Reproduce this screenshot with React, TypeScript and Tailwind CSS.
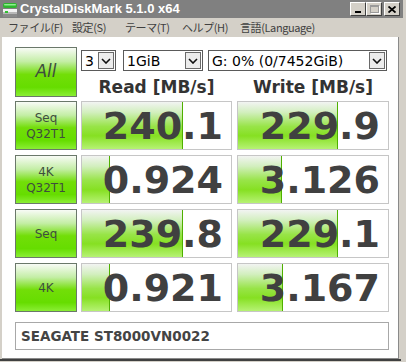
const ROWS = [
  { label: ['Seq', 'Q32T1'], read: '240.1', readBar: 101, write: '229.9', writeBar: 100 },
  { label: ['4K', 'Q32T1'], read: '0.924', readBar: 28, write: '3.126', writeBar: 44 },
  { label: ['Seq'], read: '239.8', readBar: 101, write: '229.1', writeBar: 100 },
  { label: ['4K'], read: '0.921', readBar: 28, write: '3.167', writeBar: 45 },
];

const MENU = [
  { label: 'ファイル(F)', w: 'w-[64px]' },
  { label: '設定(S)', w: 'w-[53px]' },
  { label: 'テーマ(T)', w: 'w-[57px]' },
  { label: 'ヘルプ(H)', w: 'w-[58px]' },
  { label: '言語(Language)', w: 'w-[90px]' },
];

const greenButton =
  'border border-[#6a786a] bg-[linear-gradient(to_bottom,#f8fbf6_0%,#c4eea6_28%,#72de08_55%,#66dd00_82%,#8aee34_100%)] text-[#3e4e3e] flex flex-col items-center justify-center';

const TitleIcon = () => (
  <svg width="16" height="16" viewBox="0 0 16 16">
    <rect x="1" y="1" width="14" height="5" rx="2" fill="#2fb52f" />
    <rect x="2" y="2" width="12" height="1.5" rx="0.75" fill="#8ef08e" />
    <rect x="1" y="7" width="14" height="8" rx="1" fill="#b8b8b8" />
    <rect x="1" y="7" width="14" height="3" fill="#f2f2f2" />
    <rect x="1" y="12" width="14" height="3" fill="#8a8a8a" />
    <rect x="3" y="9" width="3" height="2" fill="#30c030" />
  </svg>
);

const Chevron = () => (
  <svg width="10" height="6" viewBox="0 0 10 6">
    <path d="M1 1 L5 5 L9 1" fill="none" stroke="#111" strokeWidth="1.6" />
  </svg>
);

const Select = ({ value, w }: { value: string; w: string }) => (
  <div className={`${w} h-[21px] border border-[#5a5a5a] bg-white flex items-center justify-between pl-[3px] pr-[1px]`}>
    <span className="text-[14px] text-black leading-none">{value}</span>
    <span className="w-[16px] h-[17px] border border-[#6a6a6a] bg-[#ececec] flex items-center justify-center">
      <Chevron />
    </span>
  </div>
);

const Cell = ({ value, bar, w }: { value: string; bar: number; w: string }) => (
  <div className={`relative ${w} h-full border border-[#c6c6c6] bg-white overflow-hidden`}>
    <div
      className="absolute left-0 top-0 bottom-0 border-r border-[#4fb000] bg-[linear-gradient(to_bottom,#f2f4f2_0%,#d2efbe_22%,#98e448_52%,#86e022_72%,#b6f274_100%)]"
      style={{ width: bar }}
    />
    <div className="relative h-full flex items-center justify-end pr-[8px] text-[38px] font-bold text-[#404040] leading-none font-['DejaVu_Sans',sans-serif]">
      {value}
    </div>
  </div>
);

export default function App() {
  return (
    <div className="w-[406px] h-[362px] bg-[#d4d0c8] flex flex-col overflow-hidden font-['DejaVu_Sans',sans-serif]">
      {/* title bar */}
      <div className="w-[403px] h-[18px] bg-[#808080] flex items-center">
        <div className="ml-[2px] mt-[1px]">
          <TitleIcon />
        </div>
        <span className="ml-[2px] text-[13px] font-bold text-white font-['Liberation_Sans',sans-serif]">
          CrystalDiskMark 5.1.0 x64
        </span>
        <div className="ml-auto mr-[3px] flex items-center">
          <div className="w-[16px] h-[14px] bg-[#d4d0c8] border border-t-white border-l-white border-r-[#404040] border-b-[#404040] flex items-end justify-center pb-[2px]">
            <div className="w-[6px] h-[2px] bg-black" />
          </div>
          <div className="w-[16px] h-[14px] bg-[#d4d0c8] border border-t-white border-l-white border-r-[#404040] border-b-[#404040] flex items-center justify-center">
            <div className="w-[9px] h-[8px] border border-t-2 border-[#9a9a9a] shadow-[1px_1px_0_#ffffff]" />
          </div>
          <div className="ml-[2px] w-[16px] h-[14px] bg-[#d4d0c8] border border-t-white border-l-white border-r-[#404040] border-b-[#404040] flex items-center justify-center">
            <svg width="8" height="7" viewBox="0 0 8 7">
              <path d="M0.5 0.5 L7.5 6.5 M7.5 0.5 L0.5 6.5" stroke="#000" strokeWidth="1.8" />
            </svg>
          </div>
        </div>
      </div>

      {/* menu bar */}
      <div className="h-[19px] flex items-center pl-[8px] text-[11px] text-[#404040] font-['Noto_Sans_CJK_JP',sans-serif]">
        {MENU.map((m) => (
          <span key={m.label} className={`${m.w} whitespace-nowrap tracking-[-0.4px]`}>
            {m.label}
          </span>
        ))}
      </div>

      {/* client area */}
      <div className="ml-[2px] w-[397px] h-[322px] bg-white border-r border-b border-[#8a8a8a] pl-[13px] pt-[10px]">
        <div className="flex">
          <div className={`w-[62px] h-[50px] ${greenButton}`}>
            <span className="text-[17px] italic">All</span>
          </div>
          <div className="ml-[4px] flex flex-col">
            <div className="mt-[3px] flex">
              <Select value="3" w="w-[35px]" />
              <div className="ml-[7px]">
                <Select value="1GiB" w="w-[80px]" />
              </div>
              <div className="ml-[5px]">
                <Select value="G: 0% (0/7452GiB)" w="w-[179px]" />
              </div>
            </div>
            <div className="mt-[6px] flex text-[17px] font-bold text-[#333] leading-[20px]">
              <div className="w-[151px] text-center">Read [MB/s]</div>
              <div className="ml-[5px] w-[152px] text-center">Write [MB/s]</div>
            </div>
          </div>
        </div>

        <div className="mt-[4px] flex flex-col gap-[5px]">
          {ROWS.map((r) => (
            <div key={r.read + r.write} className="flex h-[49px]">
              <div className={`w-[62px] h-full ${greenButton} text-[12px] leading-[16px]`}>
                {r.label.map((l) => (
                  <span key={l}>{l}</span>
                ))}
              </div>
              <div className="ml-[4px] h-full">
                <Cell value={r.read} bar={r.readBar} w="w-[151px]" />
              </div>
              <div className="ml-[5px] h-full">
                <Cell value={r.write} bar={r.writeBar} w="w-[152px]" />
              </div>
            </div>
          ))}
        </div>

        <div className="mt-[10px] w-[374px] h-[28px] border border-[#a8a8a8] flex items-center pl-[5px] text-[13.5px] font-bold text-[#444]">
          SEAGATE ST8000VN0022
        </div>
      </div>
      <div className="h-[2px] w-[401px] bg-[#404040]" />
    </div>
  );
}
